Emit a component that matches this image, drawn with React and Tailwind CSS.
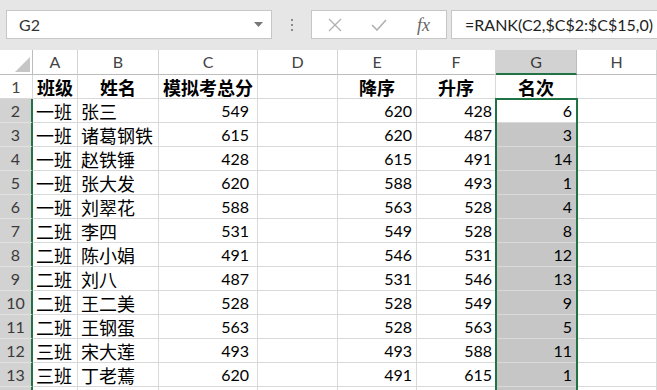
import React from "react";

const rows = [
  ["一班", "张三", 549, 620, 428, 6],
  ["一班", "诸葛钢铁", 615, 620, 487, 3],
  ["一班", "赵铁锤", 428, 615, 491, 14],
  ["一班", "张大发", 620, 588, 493, 1],
  ["一班", "刘翠花", 588, 563, 528, 4],
  ["二班", "李四", 531, 549, 528, 8],
  ["二班", "陈小娟", 491, 546, 531, 12],
  ["二班", "刘八", 487, 531, 546, 13],
  ["二班", "王二美", 528, 528, 549, 9],
  ["二班", "王钢蛋", 563, 528, 563, 5],
  ["三班", "宋大莲", 493, 493, 588, 11],
  ["三班", "丁老蔫", 620, 491, 615, 1],
  ["", "", "", "", "", ""],
];

const cjk = "font-['Noto_Sans_CJK_SC','Microsoft_YaHei',sans-serif]";
const num = "font-['Lato','Liberation_Sans',sans-serif]";
const cols = "grid grid-cols-[33px_45px_81px_99px_80px_79px_79px_81px_80px]";
const cell = "h-[24px] leading-[20px] border-r border-b border-[#d9d9d9] flex items-center overflow-hidden whitespace-nowrap";

export default function App() {
  return (
    <div className="relative w-[657px] h-[390px] overflow-hidden bg-white">
      {/* formula bar */}
      <div className="h-[50px] bg-[#e6e6e6] flex items-start pt-[10px]">
        <div className="ml-[6px] w-[266px] h-[29px] bg-white border border-[#c6c6c6] flex items-center justify-between pl-[12px] pr-[8px]">
          <span className={`${num} text-[16px] text-[#333]`}>G2</span>
          <svg width="9" height="6" viewBox="0 0 9 6"><path d="M0 0 L9 0 L4.5 5 Z" fill="#777" /></svg>
        </div>
        <div className="w-[39px] h-[29px] flex flex-col items-center justify-center gap-[3px]">
          <div className="w-[2px] h-[2px] bg-[#8a8a8a]" />
          <div className="w-[2px] h-[2px] bg-[#8a8a8a]" />
          <div className="w-[2px] h-[2px] bg-[#8a8a8a]" />
        </div>
        <div className="w-[136px] h-[29px] bg-white border border-[#c6c6c6] flex items-center">
          <div className="w-[45px] flex justify-center">
            <svg width="14" height="14" viewBox="0 0 14 14"><path d="M1 1 L13 13 M13 1 L1 13" stroke="#b0b0b0" strokeWidth="1.3" fill="none" /></svg>
          </div>
          <div className="w-[44px] flex justify-center">
            <svg width="16" height="12" viewBox="0 0 16 12"><path d="M1 6 L6 11 L15 1" stroke="#b0b0b0" strokeWidth="1.6" fill="none" /></svg>
          </div>
          <div className="w-[45px] flex justify-center">
            <span className="font-['Liberation_Serif',serif] italic text-[18px] text-[#666] leading-none">fx</span>
          </div>
        </div>
        <div className="ml-[4px] flex-1 h-[29px] bg-white border border-[#c6c6c6] border-r-0 flex items-center pl-[13px]">
          <span className={`${num} text-[16px] text-[#222]`}>=RANK(C2,$C$2:$C$15,0)</span>
        </div>
      </div>

      {/* column header */}
      <div className={cols}>
        <div className="h-[25px] border-r border-b border-[#bcbcbc] bg-white flex items-end justify-end pr-[2px] pb-[2px]">
          <svg width="15" height="15" viewBox="0 0 15 15"><path d="M15 0 L15 15 L0 15 Z" fill="#c6c6c6" /></svg>
        </div>
        {["A", "B", "C", "D", "E", "F", "G", "H"].map((c) => (
          <div
            key={c}
            className={
              c === "G"
                ? `h-[25px] bg-[#d2d2d2] border-r border-[#bcbcbc] border-b-2 border-b-[#217346] flex items-center justify-center ${num} text-[16px] text-[#3a3a3a]`
                : `h-[25px] bg-white border-r border-b border-[#d4d4d4] border-b-[#bcbcbc] flex items-center justify-center ${num} text-[16px] text-[#444]`
            }
          >
            {c}
          </div>
        ))}
      </div>

      {/* row 1 */}
      <div className={cols}>
        <div className={`${cell} bg-white justify-center ${num} text-[16px] text-[#444] border-[#d4d4d4]`}>1</div>
        <div className={`${cell} justify-center ${cjk} font-bold text-[18px] text-black`}>班级</div>
        <div className={`${cell} justify-center ${cjk} font-bold text-[18px] text-black`}>姓名</div>
        <div className={`${cell} justify-center ${cjk} font-bold text-[18px] text-black`}>模拟考总分</div>
        <div className={cell} />
        <div className={`${cell} justify-center ${cjk} font-bold text-[18px] text-black`}>降序</div>
        <div className={`${cell} justify-center ${cjk} font-bold text-[18px] text-black`}>升序</div>
        <div className={`${cell} justify-center ${cjk} font-bold text-[18px] text-black`}>名次</div>
        <div className={cell} />
      </div>

      {rows.map((r, i) => (
        <div key={i} className={cols}>
          <div className={`h-[24px] leading-[20px] border-b border-[#e2e2e2] border-r-2 border-r-[#217346] bg-[#d2d2d2] flex items-center justify-center ${num} text-[16px] text-[#3a3a3a]`}>
            {r[0] ? i + 2 : ""}
          </div>
          <div className={`${cell} pl-[3px] ${cjk} text-[18px] text-black`}>{r[0]}</div>
          <div className={`${cell} pl-[3px] ${cjk} text-[18px] text-black`}>{r[1]}</div>
          <div className={`${cell} justify-end pr-[8px] ${num} text-[16px] text-black`}>{r[2]}</div>
          <div className={cell} />
          <div className={`${cell} justify-end pr-[4px] ${num} text-[16px] text-black`}>{r[3]}</div>
          <div className={`${cell} justify-end pr-[3px] ${num} text-[16px] text-black`}>{r[4]}</div>
          <div className={`${cell} justify-end pr-[4px] ${num} text-[16px] text-black ${i === 0 ? "bg-white" : "bg-[#c6c6c6]"}`}>{r[5]}</div>
          <div className={cell} />
        </div>
      ))}

      {/* selection border G2:G15 */}
      <div className="absolute left-[495px] top-[98px] w-[83px] h-[340px] border-2 border-[#217346] pointer-events-none" />
    </div>
  );
}
